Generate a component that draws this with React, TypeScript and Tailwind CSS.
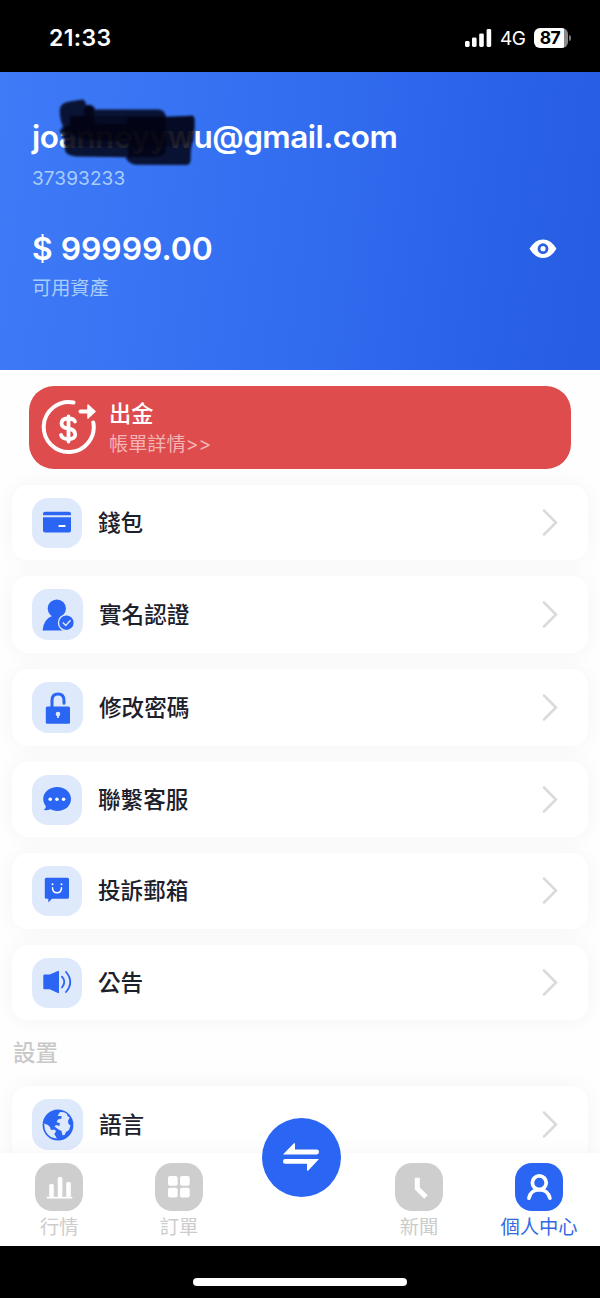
import { type ReactNode } from "react";

type MenuRowProps = {
  className: string;
  icon: ReactNode;
  label: string;
  tileClassName?: string;
};

type NavItemProps = {
  active?: boolean;
  icon: ReactNode;
  label: string;
};

function StatusBar() {
  return (
    <header className="flex h-[72px] shrink-0 items-center justify-between bg-black pl-[49px] pr-[29px] pt-[4px] text-white">
      <span className="text-[23px] font-semibold leading-none tracking-[0.4px]">21:33</span>
      <div className="flex items-center">
        <svg className="h-[18px] w-[27px]" fill="currentColor" viewBox="0 0 27 18">
          <rect height="6" rx="1.4" width="4.6" x="0" y="12" />
          <rect height="9.4" rx="1.4" width="4.6" x="7" y="8.6" />
          <rect height="13.6" rx="1.4" width="4.6" x="14.2" y="4.4" />
          <rect height="18" rx="1.4" width="4.6" x="21.6" y="0" />
        </svg>
        <span className="ml-[8px] w-[27px] text-[19px] leading-none tracking-[-0.4px]">4G</span>
        <div className="ml-[7px] flex h-[20px] w-[34px] items-center justify-center rounded-[6px] bg-[linear-gradient(90deg,#fff_87%,#8a8a8a_87%)] pr-[2px] text-[17.5px] font-bold leading-none tracking-[-0.5px] text-black">
          87
        </div>
        <span className="ml-[1px] h-[6px] w-[2px] rounded-r-full bg-[#777]" />
      </div>
    </header>
  );
}

function ScribbleMark() {
  return (
    <svg
      className="absolute left-[24px] top-[-19px] h-[72px] w-[144px]"
      fill="#02040c"
      viewBox="0 0 144 72"
    >
      <defs>
        <filter id="soft">
          <feGaussianBlur stdDeviation="0.8" />
        </filter>
      </defs>
      <g filter="url(#soft)">
        <path
          d="M3.700 14Q4 8 11 6L26 3.400Q30 4 30 9Q38 8 39 13.500H103Q109 14 110 21.300L133 19.700Q138.700 18.500 138.700 24V32L135 54L134.500 65Q134 69 130 69L80 68.700Q72 68 69.700 61.300L20 60.500Q9 59 9 54L8 44L3.700 35L7 30.500Q3.500 23 3.700 14Z"
          opacity="0.84"
        />
        <path
          d="M28 12Q37 7 38 15L38.500 28H71V23Q71 21 74 21H110V54Q109 61 101 61H72V46L30 44L8 37L8 31L14 29V20H28Z"
          opacity="0.66"
        />
        <path d="M14 20H138V46L110 51H9V32L14 30Z" opacity="0.4" />
      </g>
    </svg>
  );
}

function AccountPanel() {
  return (
    <section className="flex h-[298px] shrink-0 flex-col bg-[linear-gradient(97deg,#3f7bf7_0%,#336ef1_45%,#265de3_97%)] px-[32px] pt-[43px] text-white">
      <div className="relative h-[44px]">
        <h1 className="whitespace-nowrap text-[31.5px] font-semibold leading-[44px] tracking-[-0.5px]">
          joanneyywu@gmail.com
        </h1>
        <div className="relative -top-[44px]">
          <ScribbleMark />
        </div>
      </div>
      <p className="mt-[8px] h-[24px] text-[19px] leading-[24px] tracking-[0.1px] text-[#a9cdfb]">
        37393233
      </p>
      <div className="mt-[37px] flex h-[42px] items-center justify-between pr-[11.5px]">
        <p className="text-[31.8px] font-semibold leading-[42px]">$ 99999.00</p>
        <svg className="h-[20px] w-[28px]" viewBox="0 0 28 20">
          <path d="M0.500 9.700Q6 0.400 14 0.400T27.500 9.700Q22 19 14 19T0.500 9.700Z" fill="white" />
          <circle cx="14" cy="9.700" fill="white" r="4" stroke="#295fe4" strokeWidth="2.800" />
        </svg>
      </div>
      <p className="mt-[6px] text-[19.2px] leading-[24px] text-[#a9cdfb]">可用資產</p>
    </section>
  );
}

function WithdrawIcon() {
  return (
    <svg
      className="-mt-[2px] h-[56px] w-[56px]"
      fill="none"
      stroke="white"
      strokeLinecap="round"
      viewBox="0 0 56 56"
    >
      <path d="M32.500 3.500A25 25 0 1 0 52.300 23.500" strokeWidth="4" />
      <path d="M39.500 12.500H48" strokeWidth="4" />
      <path d="M47 6L54 12.500L47 19Z" fill="white" strokeLinejoin="round" strokeWidth="1.500" />
      <path
        d="M34 22.500Q33 19.500 27 19.500Q20.500 19.500 20.500 24.500Q20.500 28.500 27 29.500Q34.200 30.500 34.200 35.500Q34.200 40 27.500 40Q21 40 20 36M27.500 17.500V42.500"
        strokeWidth="3.800"
      />
    </svg>
  );
}

function WalletIcon() {
  return (
    <svg className="h-[32px] w-[32px]" fill="#2a65f3" viewBox="0 0 32 32">
      <path d="M2 8.200V6.700Q2 4.700 4 4.700H28Q30 4.700 30 6.700V8.200Z" />
      <path d="M2 10.200H30V23.500Q30 25.500 28 25.500H4Q2 25.500 2 23.500Z" />
      <rect fill="white" height="2" rx="0.500" width="7" x="17.500" y="18" />
    </svg>
  );
}

function VerifiedUserIcon() {
  return (
    <svg className="h-[32px] w-[32px]" fill="#2a65f3" viewBox="0 0 32 32">
      <circle cx="14.800" cy="9.500" r="9.100" />
      <path d="M0.500 31.500Q1.500 20 11 16.500H19Q24 17.500 27 21V31.500Z" />
      <circle cx="24.400" cy="23.700" r="7.900" stroke="#dfe9fc" strokeWidth="1.400" />
      <path d="M20.800 23.600L23.800 26.500L28.500 21.300" fill="none" stroke="#dfe9fc" strokeWidth="1.400" />
    </svg>
  );
}

function UnlockIcon() {
  return (
    <svg className="h-[32px] w-[32px]" viewBox="0 0 32 32">
      <path
        d="M10 15V8.500Q10 2 16 2Q22 2 22 8.500V11.300"
        fill="none"
        stroke="#2a65f3"
        strokeLinecap="round"
        strokeWidth="3"
      />
      <rect fill="#2a65f3" height="17.300" rx="1.500" width="24.200" x="3.800" y="14.500" />
      <circle cx="16" cy="22" fill="#dfe9fc" r="2.300" />
      <path d="M14.900 22H17.100L16.800 26H15.200Z" fill="#dfe9fc" />
    </svg>
  );
}

function ChatIcon() {
  return (
    <svg className="h-[32px] w-[32px]" fill="#2a65f3" viewBox="0 0 32 32">
      <path d="M16.200 3C8.500 3 2.200 8 2.200 15C2.200 18.500 4 21 5 22.500Q4.500 24.500 2.800 26Q6.500 26.500 9.500 25.200Q12.500 27 16.200 27C24 27 30 22 30 15S24 3 16.200 3Z" />
      <g fill="white">
        <circle cx="9.200" cy="15.200" r="1.800" />
        <circle cx="15.900" cy="15.200" r="1.800" />
        <circle cx="22.600" cy="15.200" r="1.800" />
      </g>
    </svg>
  );
}

function ComplaintIcon() {
  return (
    <svg className="h-[32px] w-[32px]" fill="#2a65f3" viewBox="0 0 32 32">
      <path d="M5.300 2.800H26.500Q28 2.800 28 4.300V22.300Q28 23.800 26.500 23.800H11L7.300 27.500V23.800H5.300Q3.800 23.800 3.800 22.300V4.300Q3.800 2.800 5.300 2.800Z" />
      <circle cx="11.500" cy="9.200" fill="white" r="1" />
      <circle cx="20.500" cy="9.200" fill="white" r="1" />
      <path
        d="M11.500 12.700Q11.500 17.700 16 17.700T20.500 12.700"
        fill="none"
        stroke="white"
        strokeLinecap="round"
        strokeWidth="1.500"
      />
    </svg>
  );
}

function SpeakerIcon() {
  return (
    <svg className="h-[32px] w-[32px]" fill="#2a65f3" viewBox="0 0 32 32">
      <path d="M3.500 7.600H8.700L16.800 3.900Q18 3.500 18 4.700V25.300Q18 26.500 16.800 26.100L8.700 22.200H3.500Q2.300 22.200 2.300 21V8.800Q2.300 7.600 3.500 7.600Z" />
      <path
        d="M21 9.700Q25.500 14.800 21 20.500M25 5Q33.500 14.800 25 25"
        fill="none"
        stroke="#2a65f3"
        strokeLinecap="round"
        strokeWidth="1.800"
      />
    </svg>
  );
}

function GlobeIcon() {
  return (
    <svg className="h-[32px] w-[32px]" viewBox="0 0 32 32">
      <circle cx="16" cy="16" fill="#2a65f3" r="15.400" />
      <g fill="#dfe9fc">
        <path d="M18 3L22 3.300L25 5L25.500 7L27.700 8.500L26 12L26.500 15L28.500 16.500L27 21L24 23L22.500 26L20.500 26.300L19.500 22L16.500 20.500L12.500 17.500L14 16L17.500 17L17.800 14.200L14.500 13L16 10.500L19.500 9.500V7L15.500 7Z" />
        <path d="M2.300 14.500L6 16L8.300 18.500L8.700 20.800H13L14 22.500L12.300 25L15 29.500Q9 29.300 5 24.500Q2 20.500 2.300 14.500Z" />
      </g>
    </svg>
  );
}

function MenuRow({ className, icon, label, tileClassName = "h-[50px] w-[50px]" }: MenuRowProps) {
  return (
    <button
      className={`flex w-full shrink-0 items-center rounded-[16px] bg-white pl-[20px] pr-[30px] text-left shadow-[0_0_22px_rgba(0,0,0,0.045)] ${className}`}
      type="button"
    >
      <span
        className={`flex shrink-0 items-center justify-center rounded-[16px] bg-[#dfe9fc] ${tileClassName}`}
      >
        {icon}
      </span>
      <span className="ml-[16px] flex-1 text-[22.6px] font-medium leading-[32px] text-[#1b202b]">
        {label}
      </span>
      <svg
        className="h-[28px] w-[16px]"
        fill="none"
        stroke="#dadada"
        strokeLinecap="round"
        strokeWidth="2.500"
        viewBox="0 0 16 28"
      >
        <path d="M2 1.500L14 13.500L2 25.500" />
      </svg>
    </button>
  );
}

function NavItem({ active = false, icon, label }: NavItemProps) {
  return (
    <button className="flex w-[120px] flex-col items-center" type="button">
      <span
        className={`flex h-[48px] w-[48px] items-center justify-center rounded-[17px] ${
          active ? "bg-[#2a65f3]" : "bg-[#cecece]"
        }`}
      >
        {icon}
      </span>
      <span
        className={`mt-[3px] whitespace-nowrap text-[19.3px] leading-[26px] ${
          active ? "text-[#3168e4]" : "text-[#cccccc]"
        }`}
      >
        {label}
      </span>
    </button>
  );
}

function BottomNav() {
  return (
    <nav className="relative h-[93px] shrink-0 bg-white pt-[10px] shadow-[0_0_22px_rgba(0,0,0,0.045)]">
      <div className="-ml-px flex">
        <NavItem
          icon={
            <svg className="h-[28px] w-[28px]" fill="white" viewBox="0 0 28 28">
              <rect height="13" rx="1.500" width="4.600" x="4.200" y="11" />
              <rect height="20" rx="1.500" width="4.600" x="12.800" y="4" />
              <rect height="15" rx="1.500" width="4.600" x="21.200" y="9" />
              <rect height="1.600" rx="0.800" width="26" x="1.500" y="23.800" />
            </svg>
          }
          label="行情"
        />
        <NavItem
          icon={
            <svg className="h-[22px] w-[22px]" fill="white" viewBox="0 0 22 22">
              <rect height="9.700" rx="2" width="9.700" x="0" y="0" />
              <rect height="9.700" rx="2" width="9.700" x="12" y="0" />
              <rect height="9.700" rx="2" width="9.700" x="0" y="11.700" />
              <rect height="9.700" rx="2" width="9.700" x="12" y="11.700" />
            </svg>
          }
          label="訂單"
        />
        <div className="w-[120px]" />
        <NavItem
          icon={
            <svg
              className="h-[28px] w-[28px]"
              fill="none"
              stroke="white"
              strokeLinejoin="round"
              strokeWidth="5"
              viewBox="0 0 28 28"
            >
              <path d="M12.300 4.800V15.500L21 24" />
            </svg>
          }
          label="新聞"
        />
        <NavItem
          active
          icon={
            <svg
              className="h-[28px] w-[28px]"
              fill="none"
              stroke="white"
              strokeLinecap="round"
              strokeWidth="3.700"
              viewBox="0 0 28 28"
            >
              <circle cx="14.300" cy="9.700" r="6.900" />
              <path d="M3.900 25.200C4.800 20 9 16.700 14.300 16.700S23.800 20 24.900 25.200" />
            </svg>
          }
          label="個人中心"
        />
      </div>
      <button
        aria-label="交易"
        className="absolute left-[261.5px] top-[-35.5px] flex h-[79.5px] w-[79.5px] items-center justify-center rounded-full bg-[#2a65f3]"
        type="button"
      >
        <svg className="h-[28px] w-[38px]" fill="white" viewBox="0 0 38 28">
          <path d="M1 11.400L11.700 0.400Q13 -0.500 13 1.200V6.600H34.800Q37 6.600 37 9T34.800 11.400Z" />
          <path d="M37 16L26.300 27.600Q25 28.500 25 26.800V20.800H3.200Q1 20.800 1 18.400T3.200 16Z" />
        </svg>
      </button>
    </nav>
  );
}

export default function App() {
  return (
    <div className="flex h-[1298px] w-[600px] flex-col overflow-hidden bg-black font-['Inter','Noto_Sans_CJK_TC',sans-serif]">
      <StatusBar />
      <AccountPanel />
      <main className="flex min-h-0 flex-1 flex-col overflow-hidden bg-[#fefefe] px-[12px]">
        <button
          className="relative mx-[17px] mt-[16px] flex h-[83px] shrink-0 items-center rounded-[25px] bg-[#de4c4e] pl-[12px] text-left text-white"
          type="button"
        >
          <WithdrawIcon />
          <span className="ml-[12px] flex flex-col pt-[2px]">
            <span className="text-[22.2px] font-medium leading-[30px]">出金</span>
            <span className="text-[19.2px] leading-[30px] text-[#f3b4b5]">帳單詳情&gt;&gt;</span>
          </span>
        </button>
        <MenuRow className="mt-[16px] h-[75px]" icon={<WalletIcon />} label="錢包" />
        <MenuRow
          className="mt-[16px] h-[77px]"
          icon={<VerifiedUserIcon />}
          label="實名認證"
          tileClassName="h-[51px] w-[51px]"
        />
        <MenuRow
          className="mt-[16px] h-[77px]"
          icon={<UnlockIcon />}
          label="修改密碼"
          tileClassName="h-[51px] w-[51px]"
        />
        <MenuRow className="mt-[16px] h-[75px]" icon={<ChatIcon />} label="聯繫客服" />
        <MenuRow className="mt-[16px] h-[76px]" icon={<ComplaintIcon />} label="投訴郵箱" />
        <MenuRow className="mt-[16px] h-[75px]" icon={<SpeakerIcon />} label="公告" />
        <h2 className="mt-[17px] h-[32px] shrink-0 pl-px text-[22.5px] font-medium leading-[32px] text-[#c9c9c9]">
          設置
        </h2>
        <MenuRow
          className="mt-[17px] h-[77px]"
          icon={<GlobeIcon />}
          label="語言"
          tileClassName="h-[51px] w-[51px]"
        />
      </main>
      <BottomNav />
      <footer className="relative flex h-[52px] shrink-0 justify-center bg-black pt-[32px]">
        <span className="h-[8px] w-[214px] rounded-full bg-white" />
      </footer>
    </div>
  );
}
